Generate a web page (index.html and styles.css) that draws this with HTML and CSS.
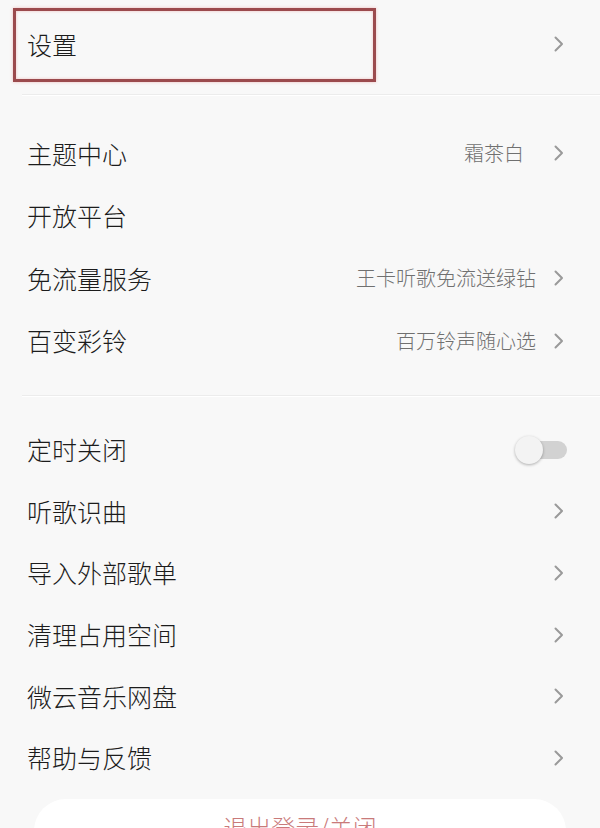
FILE: index.html
```html
<!DOCTYPE html>
<html lang="zh-CN">
<head>
<meta charset="utf-8">
<title>设置</title>
<link rel="stylesheet" href="styles.css">
</head>
<body>
<div class="page">
  <section class="group group-top">
    <div class="row row-tall">
      <span class="label">设置</span>
      <span class="right"><svg class="chev" viewBox="0 0 10 16"><path d="M1.5 1.5 L8 8 L1.5 14.5"/></svg></span>
    </div>
    <div class="highlight"></div>
  </section>
  <div class="divider"></div>
  <section class="group group-mid">
    <div class="row">
      <span class="label">主题中心</span>
      <span class="right"><span class="value value-theme">霜茶白</span><svg class="chev" viewBox="0 0 10 16"><path d="M1.5 1.5 L8 8 L1.5 14.5"/></svg></span>
    </div>
    <div class="row">
      <span class="label">开放平台</span>
    </div>
    <div class="row">
      <span class="label">免流量服务</span>
      <span class="right"><span class="value">王卡听歌免流送绿钻</span><svg class="chev" viewBox="0 0 10 16"><path d="M1.5 1.5 L8 8 L1.5 14.5"/></svg></span>
    </div>
    <div class="row">
      <span class="label">百变彩铃</span>
      <span class="right"><span class="value">百万铃声随心选</span><svg class="chev" viewBox="0 0 10 16"><path d="M1.5 1.5 L8 8 L1.5 14.5"/></svg></span>
    </div>
  </section>
  <div class="divider"></div>
  <section class="group group-bottom">
    <div class="row row-b">
      <span class="label">定时关闭</span>
      <span class="toggle"><span class="track"></span><span class="knob"></span></span>
    </div>
    <div class="row row-b">
      <span class="label">听歌识曲</span>
      <span class="right"><svg class="chev" viewBox="0 0 10 16"><path d="M1.5 1.5 L8 8 L1.5 14.5"/></svg></span>
    </div>
    <div class="row row-b">
      <span class="label">导入外部歌单</span>
      <span class="right"><svg class="chev" viewBox="0 0 10 16"><path d="M1.5 1.5 L8 8 L1.5 14.5"/></svg></span>
    </div>
    <div class="row row-b">
      <span class="label">清理占用空间</span>
      <span class="right"><svg class="chev" viewBox="0 0 10 16"><path d="M1.5 1.5 L8 8 L1.5 14.5"/></svg></span>
    </div>
    <div class="row row-b">
      <span class="label">微云音乐网盘</span>
      <span class="right"><svg class="chev" viewBox="0 0 10 16"><path d="M1.5 1.5 L8 8 L1.5 14.5"/></svg></span>
    </div>
    <div class="row row-b">
      <span class="label">帮助与反馈</span>
      <span class="right"><svg class="chev" viewBox="0 0 10 16"><path d="M1.5 1.5 L8 8 L1.5 14.5"/></svg></span>
    </div>
  </section>
  <div class="logout">退出登录/关闭</div>
</div>
</body>
</html>
```

FILE: styles.css
```css
html, body {
  margin: 0;
  padding: 0;
  background: #f8f8f8;
}
body {
  font-family: "Noto Sans CJK SC", "Noto Sans", sans-serif;
  font-weight: 300;
  color: #222;
  width: 600px;
  height: 828px;
  overflow: hidden;
}
.page {
  display: flex;
  flex-direction: column;
}
.group {
  display: flex;
  flex-direction: column;
}
.group-top {
  position: relative;
  padding-bottom: 6px;
}
.group-mid {
  padding: 26px 0 23px;
}
.group-bottom {
  padding: 22px 0 0;
}
.row {
  height: 62.5px;
  display: flex;
  align-items: center;
  justify-content: space-between;
  padding: 0 36px 0 27px;
}
.row-tall {
  height: 88px;
}
.row-b {
  height: 61.6px;
}
.label {
  font-size: 25px;
  line-height: 1;
  color: #1c1c1c;
}
.right {
  display: flex;
  align-items: center;
  gap: 18px;
}
.value {
  font-size: 20px;
  line-height: 1;
  color: #707070;
}
.value-theme {
  margin-right: 12px;
}
.chev {
  width: 10px;
  height: 16px;
  display: block;
}
.chev path {
  fill: none;
  stroke: #9a9a9a;
  stroke-width: 2;
  stroke-linecap: round;
  stroke-linejoin: round;
}
.divider {
  height: 1px;
  margin-left: 22px;
  background: #ececec;
  border-bottom: 1px solid #ffffff;
}
.highlight {
  position: absolute;
  left: 13px;
  top: 8px;
  width: 357px;
  height: 68px;
  border: 3px solid #9b4a4d;
  box-shadow: 0 0 3px rgba(230, 120, 120, 0.45), inset 0 0 3px rgba(230, 120, 120, 0.45);
}
.toggle {
  position: relative;
  width: 52px;
  height: 28px;
  margin-right: -3px;
  display: block;
}
.track {
  position: absolute;
  left: 14px;
  right: 0;
  top: 5px;
  height: 18px;
  border-radius: 9px;
  background: #d2d2d2;
}
.knob {
  position: absolute;
  left: 0;
  top: 0;
  width: 28px;
  height: 28px;
  border-radius: 50%;
  background: #f3f3f3;
  box-shadow: 0 1px 3px rgba(0, 0, 0, 0.3);
}
.logout {
  margin: 10px 34px 0;
  height: 70px;
  border-radius: 32px;
  background: #ffffff;
  color: #c97a7a;
  font-size: 24px;
  text-align: center;
  padding-top: 16px;
  box-sizing: border-box;
  line-height: 1;
}
```
